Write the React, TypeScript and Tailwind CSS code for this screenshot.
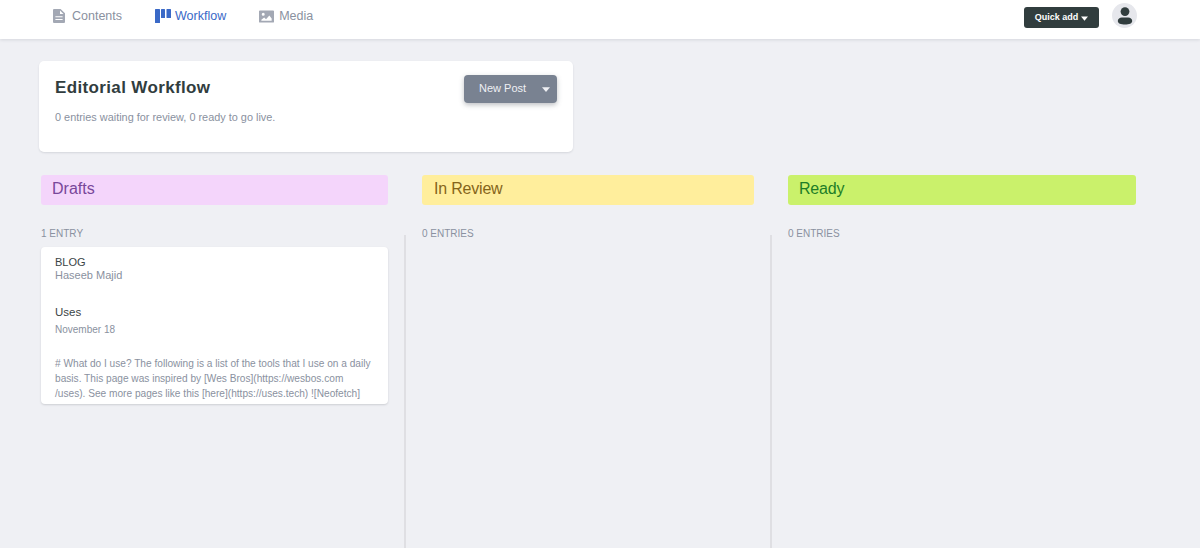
const Caret = ({ className }: { className: string }) => (
  <svg viewBox="0 0 8 5" className={className} fill="currentColor">
    <path d="M0 0.2h8L4 5z" />
  </svg>
);

const ContentsIcon = () => (
  <svg viewBox="0 0 12 14" className="w-[12px] h-[14px] text-[#a3a8b4]" fill="currentColor">
    <path fillRule="evenodd" d="M1 0h6.600L12 4.200V13a1 1 0 0 1-1 1H1a1 1 0 0 1-1-1V1a1 1 0 0 1 1-1zM7 1.500V5h3.500zM2.400 7.200v1.100h7.200V7.200zm0 2.800v1.100h7.200V10z" />
  </svg>
);

const WorkflowIcon = () => (
  <svg viewBox="0 0 16 14" className="w-[16px] h-[14px] text-[#3a69c7]" fill="currentColor">
    <rect x="0" y="0" width="5" height="14" rx="0.5" />
    <rect x="6" y="0" width="4" height="9" rx="0.5" />
    <rect x="11.500" y="0" width="4.500" height="9" rx="0.5" />
  </svg>
);

const MediaIcon = () => (
  <svg viewBox="0 0 16 13" className="w-[15px] h-[13px] text-[#a3a8b4]" fill="currentColor">
    <path fillRule="evenodd" d="M1 0h14a1 1 0 0 1 1 1v11a1 1 0 0 1-1 1H1a1 1 0 0 1-1-1V1a1 1 0 0 1 1-1zm1.500 11h11V8.500L11 5.500 7.500 9.500 5.500 7.500l-3 2.500zM4.500 2.500a1.600 1.600 0 1 0 0 3.200 1.600 1.600 0 0 0 0-3.200z" />
  </svg>
);

const NavItem = ({ icon, label, gap, active }: { icon: React.ReactNode; label: string; gap: string; active?: boolean }) => (
  <div className={`flex items-center ${gap} text-[12.5px] leading-[14px] ${active ? "text-[#3a69c7]" : "text-[#8a91a0]"}`}>
    {icon}
    <span>{label}</span>
  </div>
);

export default function App() {
  return (
    <div className="h-[548px] overflow-hidden bg-[#eff0f4] flex flex-col font-['Liberation_Sans',Arial,sans-serif]">
      <header className="h-[39px] shrink-0 bg-white shadow-[0_1px_3px_rgba(68,74,87,0.15)] flex items-start justify-between pl-[53px] pr-[63px]">
        <nav className="flex gap-[33px] pt-[9px]">
          <NavItem icon={<ContentsIcon />} label="Contents" gap="gap-[7px]" />
          <NavItem icon={<WorkflowIcon />} label="Workflow" gap="gap-[4px]" active />
          <NavItem icon={<MediaIcon />} label="Media" gap="gap-[5px]" />
        </nav>
        <div className="flex items-start gap-[13px] pt-[3px]">
          <button className="mt-[4px] h-[21px] w-[75px] bg-[#313d3e] rounded-[3px] text-white text-[9px] font-bold flex items-center justify-center gap-[3px]">
            Quick add
            <Caret className="w-[7px] h-[5px] mt-[1px]" />
          </button>
          <div className="w-[25px] h-[25px] rounded-full bg-[#e6e7ec] flex items-center justify-center">
            <svg viewBox="0 0 16 18" className="w-[16px] h-[18px] text-[#313d3e]" fill="currentColor">
              <circle cx="8" cy="4.600" r="4.400" />
              <path d="M0.800 14c0-2.400 2-3.600 4-3.600h6.400c2 0 4 1.200 4 3.600 0 2.400-3 3.600-7.200 3.600S0.800 16.400 0.800 14z" />
            </svg>
          </div>
        </div>
      </header>

      <main className="flex-1 min-h-0 flex flex-col pl-[39px] pt-[22px]">
        <section className="w-[534px] h-[91px] bg-white rounded-[5px] shadow-[0_1px_2px_rgba(68,74,87,0.15)] flex justify-between pl-[16px] pr-[16px] pt-[14px]">
          <div>
            <h1 className="text-[17px] leading-[26px] font-bold tracking-[0.36px] text-[#313d3e]">Editorial Workflow</h1>
            <p className="mt-[9px] text-[10.9px] leading-[14px] text-[#8a91a0]">0 entries waiting for review, 0 ready to go live.</p>
          </div>
          <button className="h-[28px] w-[93px] bg-[#798291] rounded-[4px] shadow-[0_2px_5px_rgba(68,74,87,0.35)] text-[#eff0f4] flex items-center justify-between pl-[15px] pr-[7px]">
            <span className="text-[11px] -mt-[1px]">New Post</span>
            <Caret className="w-[8px] h-[5px] mt-[1px]" />
          </button>
        </section>

        <div className="mt-[23px] pl-[2px] flex gap-[34px]">
          <div className="w-[347px] h-[30px] rounded-[3px] bg-[#f4d5fb] text-[#79479a] text-[16px] leading-[27px] pl-[11px]">Drafts</div>
          <div className="w-[332px] h-[30px] rounded-[3px] bg-[#ffee9c] text-[#85651a] text-[16px] tracking-[-0.2px] leading-[27px] pl-[12px]">In Review</div>
          <div className="w-[348px] h-[30px] rounded-[3px] bg-[#caf16b] text-[#1d7d27] text-[16px] tracking-[-0.2px] leading-[27px] pl-[11px]">Ready</div>
        </div>

        <div className="flex-1 min-h-0 flex pl-[2px] mt-[23px]">
          <div className="w-[347px]">
            <div className="text-[10px] leading-[12px] text-[#8a91a0]">1 ENTRY</div>
            <article className="mt-[7px] h-[157px] overflow-hidden bg-white rounded-[4px] shadow-[0_1px_2px_rgba(68,74,87,0.2)] px-[14px] pt-[8px]">
              <div className="text-[11px] leading-[14px] text-[#3a4445]">BLOG</div>
              <div className="text-[11px] leading-[13px] text-[#8a91a0]">Haseeb Majid</div>
              <h2 className="mt-[20px] text-[11.5px] leading-[20px] font-normal text-[#3a4445]">Uses</h2>
              <div className="mt-[1px] text-[10px] leading-[14px] text-[#8a91a0]">November 18</div>
              <p className="mt-[19px] text-[10.13px] leading-[15px] text-[#8a91a0]">
                # What do I use? The following is a list of the tools that I use on a daily
                <br />
                basis. This page was inspired by [Wes Bros](https://wesbos.com
                <br />
                /uses). See more pages like this [here](https://uses.tech) ![Neofetch]
              </p>
            </article>
          </div>
          <div className="ml-[16px] mt-[7px] w-[350px] border-l-2 border-[#dfdfe3] pl-[16px]">
            <div className="-mt-[7px] text-[10px] leading-[12px] text-[#8a91a0]">0 ENTRIES</div>
          </div>
          <div className="ml-[16px] mt-[7px] w-[350px] border-l-2 border-[#dfdfe3] pl-[16px]">
            <div className="-mt-[7px] text-[10px] leading-[12px] text-[#8a91a0]">0 ENTRIES</div>
          </div>
        </div>
      </main>
    </div>
  );
}
